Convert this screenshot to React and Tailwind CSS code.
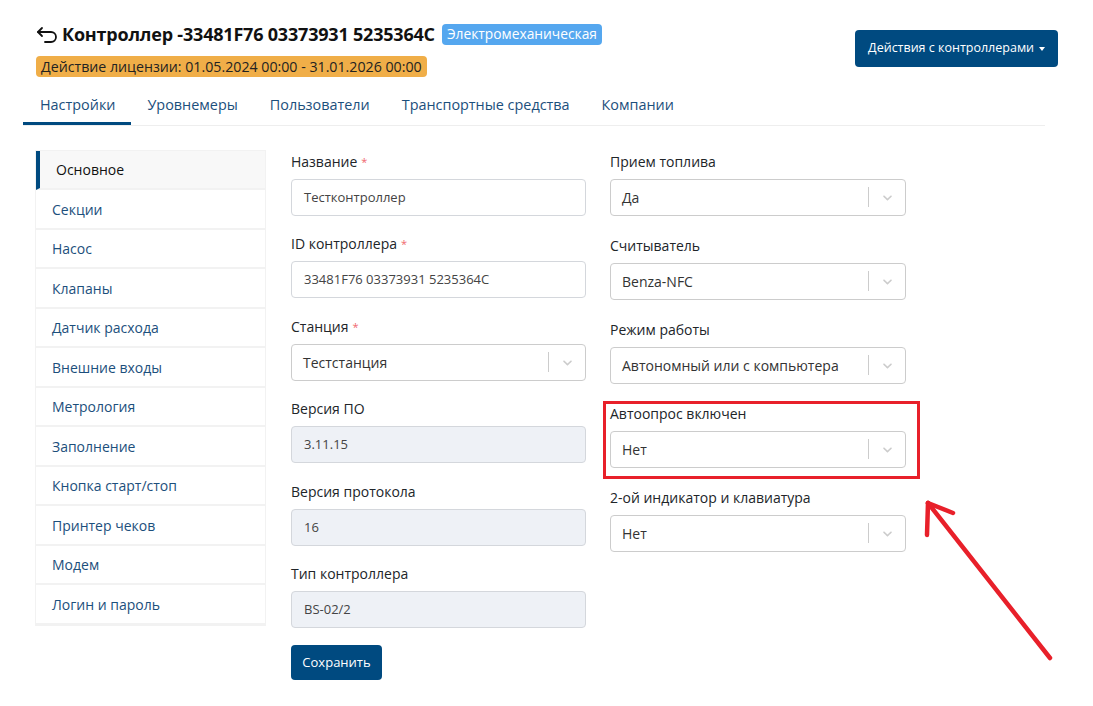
import React from "react";

const blue = "#004a80";

const sideItems = [
  "Основное",
  "Секции",
  "Насос",
  "Клапаны",
  "Датчик расхода",
  "Внешние входы",
  "Метрология",
  "Заполнение",
  "Кнопка старт/стоп",
  "Принтер чеков",
  "Модем",
  "Логин и пароль",
];

const tabs = ["Настройки", "Уровнемеры", "Пользователи", "Транспортные средства", "Компании"];

function Label({ children, required }) {
  return (
    <div className="h-[19px] text-[14px] leading-[19px] text-[#212529] mb-[8px]">
      {children}
      {required && <span className="text-[#f0686e] text-[11px] align-top ml-[4px]">*</span>}
    </div>
  );
}

function TextInput({ value, disabled }) {
  return (
    <div
      className={
        "h-[37px] rounded-[4px] border border-[#d4d7dc] px-[12px] flex items-center text-[13px] text-[#444] " +
        (disabled ? "bg-[#eef1f6]" : "bg-white")
      }
    >
      {value}
    </div>
  );
}

function Select({ value }) {
  return (
    <div className="h-[37px] rounded-[4px] border border-[#cccccc] bg-white flex items-center text-[14px] text-[#333]">
      <div className="flex-1 pl-[11px]">{value}</div>
      <div className="w-px h-[20px] bg-[#cccccc]" />
      <div className="w-[36px] flex items-center justify-center">
        <svg width="15" height="15" viewBox="0 0 20 20" fill="#cccccc">
          <path d="M4.516 7.548c0.436-0.446 1.043-0.481 1.576 0l3.908 3.747 3.908-3.747c0.533-0.481 1.141-0.446 1.574 0 0.436 0.445 0.408 1.197 0 1.615-0.406 0.418-4.695 4.502-4.695 4.502-0.217 0.223-0.502 0.335-0.787 0.335s-0.57-0.112-0.789-0.335c0 0-4.287-4.084-4.695-4.502s-0.436-1.170 0-1.615z" />
        </svg>
      </div>
    </div>
  );
}

function Field({ label, required, children, className = "" }) {
  return (
    <div className={"relative " + className}>
      <Label required={required}>{label}</Label>
      {children}
    </div>
  );
}

export default function App() {
  return (
    <div
      className="relative w-[1093px] h-[706px] bg-white overflow-hidden"
      style={{ fontFamily: '"Open Sans", "Noto Sans", sans-serif' }}
    >
      <div className="flex justify-between pl-[36px] pr-[35px] pt-[22px]">
        <div>
          <div className="flex items-center h-[24px]">
            <svg width="24" height="20" viewBox="0 0 24 20" fill="none" stroke="#111" strokeWidth="1.8" strokeLinecap="round" strokeLinejoin="round">
              <path d="M6 4 L2 8 L6 12" />
              <path d="M2 8 H15 a5 5 0 0 1 0 10 H9" />
            </svg>
            <span className="ml-[2px] text-[18px] font-bold text-[#111] tracking-[-0.2px]">
              Контроллер -33481F76 03373931 5235364C
            </span>
            <span className="ml-[7px] h-[21px] px-[5px] rounded-[4px] bg-[#55a7ef] text-white text-[13.8px] flex items-center">
              Электромеханическая
            </span>
          </div>
          <div className="mt-[10px] inline-flex h-[21px] items-center px-[5px] rounded-[4px] bg-[#f0ae48] text-[14.2px] text-[#222]">
            Действие лицензии: 01.05.2024 00:00 - 31.01.2026 00:00
          </div>
        </div>
        <div
          className="mt-[8px] h-[37px] px-[13px] rounded-[4px] text-white text-[12.5px] flex items-center gap-[5px]"
          style={{ backgroundColor: blue }}
        >
          Действия с контроллерами
          <span className="w-0 h-0 border-l-[3.5px] border-r-[3.5px] border-t-[4px] border-l-transparent border-r-transparent border-t-white" />
        </div>
      </div>

      <div className="ml-[23px] w-[1022px] mt-[9px] flex border-b border-[#eeeeee]">
        {tabs.map((t, i) => (
          <div
            key={t}
            className={
              "h-[38px] px-[16px] flex items-center text-[14.4px] text-[#1c4f7c] " +
              (i === 0 ? "border-b-[3px] border-[#004a80] pl-[17px]" : "border-b-[3px] border-transparent")
            }
          >
            {t}
          </div>
        ))}
      </div>

      <div className="flex items-start pl-[35px] pt-[24px]">
        <div className="w-[231px] border border-[#f2f2f2]">
          {sideItems.map((s, i) => (
            <div
              key={s}
              className={
                "h-[39.5px] flex items-center text-[14px] border-b-2 border-[#f2f2f2] " +
                (i === 0
                  ? "bg-[#f8f8f8] text-[#111] pl-[16px] border-l-[4px] border-l-[#004a80]"
                  : "text-[#1c4f7c] pl-[16px]")
              }
            >
              {s}
            </div>
          ))}
        </div>

        <div className="ml-[25px] w-[295px] pt-[2px] flex flex-col gap-[18.5px]">
          <Field label="Название" required>
            <TextInput value="Тестконтроллер" />
          </Field>
          <Field label="ID контроллера" required>
            <TextInput value="33481F76 03373931 5235364C" />
          </Field>
          <Field label="Станция" required>
            <Select value="Тестстанция" />
          </Field>
          <Field label="Версия ПО">
            <TextInput value="3.11.15" disabled />
          </Field>
          <Field label="Версия протокола">
            <TextInput value="16" disabled />
          </Field>
          <Field label="Тип контроллера">
            <TextInput value="BS-02/2" disabled />
          </Field>
          <div
            className="-mt-[2px] w-[91px] h-[35px] rounded-[4px] text-white text-[13px] flex items-center justify-center"
            style={{ backgroundColor: blue }}
          >
            Сохранить
          </div>
        </div>

        <div className="ml-[24px] w-[296px] pt-[2px] flex flex-col gap-[20px]">
          <Field label="Прием топлива">
            <Select value="Да" />
          </Field>
          <Field label="Считыватель">
            <Select value="Benza-NFC" />
          </Field>
          <Field label="Режим работы">
            <Select value="Автономный или с компьютера" />
          </Field>
          <Field label="Автоопрос включен">
            <Select value="Нет" />
            <div className="absolute -left-[7px] -right-[14px] -top-[3px] -bottom-[11px] border-[3.5px] border-[#e8202a] pointer-events-none" />
          </Field>
          <Field label="2-ой индикатор и клавиатура">
            <Select value="Нет" />
          </Field>
        </div>
      </div>

      <svg className="absolute left-0 top-0 pointer-events-none" width="1093" height="706">
        <g stroke="#e8202a" strokeWidth="4.5" strokeLinecap="round" fill="none">
          <path d="M1050 658 L928 503" />
          <path d="M928 503 L927 535" />
          <path d="M928 503 L953 513" />
        </g>
      </svg>
    </div>
  );
}
